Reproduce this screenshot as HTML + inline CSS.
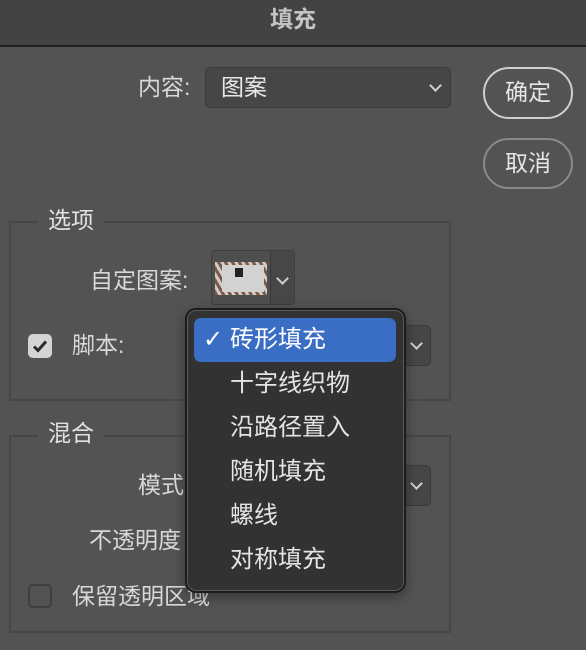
<!DOCTYPE html>
<html><head><meta charset="utf-8"><style>
*{box-sizing:border-box;margin:0;padding:0}
body{width:586px;height:650px;background:#535353;font-family:"Liberation Sans","Noto Sans CJK SC",sans-serif;color:#d8d8d8;position:relative;overflow:hidden;font-size:23px}
.a{position:absolute;white-space:nowrap;line-height:1}
.title{position:absolute;left:0;top:0;width:586px;height:47px;background:#434343;border-bottom:2px solid #1e1e1e;text-align:center;font-size:23px;font-weight:bold;color:#c4c4c4;line-height:38px}
.sel{position:absolute;background:#464646;border:1.5px solid #3a3a3a;border-radius:5px}
.chev{position:absolute;width:9px;height:9px;border-right:2px solid #d0d0d0;border-bottom:2px solid #d0d0d0;transform:rotate(45deg)}
.btn{position:absolute;border:2px solid #cfcfcf;border-radius:26px;text-align:center;font-size:23px;color:#e6e6e6}
.grp{position:absolute;border:2px solid #464646}
.leg{position:absolute;background:#535353;padding:0 10px;font-size:23px;color:#e2e2e2}
.cb{position:absolute;width:24px;height:24px;border-radius:5px}
.menu{position:absolute;left:185px;top:308px;width:221px;height:285px;background:#323232;border:2px solid #1c1c1c;border-radius:11px;box-shadow:inset 0 0 0 1px #5a5a5a,0 4px 12px rgba(0,0,0,.35)}
.hl{position:absolute;left:194px;top:318px;width:202px;height:44px;background:#3a6ec4;border-radius:7px}
.mi{position:absolute;left:230px;font-size:24px;color:#e4e4e4;line-height:1}
</style></head><body>
<div class="title">填充</div>

<div class="a" style="left:138px;top:76px;">内容:</div>
<div class="sel" style="left:205px;top:67px;width:246px;height:41px"></div>
<div class="a" style="left:221px;top:76px;color:#e8e8e8">图案</div>
<div class="chev" style="left:431px;top:81px"></div>

<div class="btn" style="left:483px;top:67px;width:90px;height:52px;line-height:47px">确定</div>
<div class="btn" style="left:483px;top:138px;width:90px;height:51px;line-height:46px;border-color:#8a8a8a">取消</div>

<div class="grp" style="left:9px;top:221px;width:442px;height:180px"></div>
<div class="leg" style="left:38px;top:207px;line-height:26px">选项</div>
<div class="a" style="left:90px;top:269px">自定图案:</div>
<div style="position:absolute;left:211px;top:250px;width:84px;height:55px;border:1.5px solid #3e3e3e;border-radius:4px;background:#4e4e4e"></div>
<div style="position:absolute;left:270px;top:251px;width:24px;height:53px;background:#474747;border-left:1.5px solid #3a3a3a"></div>
<div style="position:absolute;left:215px;top:262px;width:52px;height:33px;background:repeating-linear-gradient(60deg,#7a5a4a 0 3px,#d4ccc4 3px 6px)"></div>
<div style="position:absolute;left:222px;top:265px;width:42px;height:27px;background:#d2d2d2"></div>
<div style="position:absolute;left:235px;top:268px;width:8px;height:9px;background:#222"></div>
<div class="chev" style="left:278px;top:274px"></div>

<div class="cb" style="left:28px;top:334px;background:#d4d4d4"></div>
<svg style="position:absolute;left:28px;top:334px" width="24" height="24"><path d="M6 12.5l4 4 8-9" stroke="#2a2a2a" stroke-width="3" fill="none"/></svg>
<div class="a" style="left:72px;top:334px">脚本:</div>
<div class="sel" style="left:380px;top:325px;width:51px;height:41px"></div>
<div class="chev" style="left:412px;top:339px"></div>

<div class="grp" style="left:9px;top:435px;width:442px;height:198px"></div>
<div class="leg" style="left:38px;top:420px;line-height:26px">混合</div>
<div class="a" style="left:138px;top:474px">模式</div>
<div class="sel" style="left:380px;top:465px;width:51px;height:41px"></div>
<div class="chev" style="left:412px;top:479px"></div>
<div class="a" style="left:89px;top:529px">不透明度</div>
<div class="cb" style="left:28px;top:584px;border:2px solid #3f3f3f"></div>
<div class="a" style="left:72px;top:585px">保留透明区域</div>

<div class="menu"></div>
<div class="hl"></div>
<div class="a" style="left:203px;top:327px;font-size:24px;color:#fff;font-family:'DejaVu Sans',sans-serif">✓</div>
<div class="mi" style="top:328px;color:#fff">砖形填充</div>
<div class="mi" style="top:372px">十字线织物</div>
<div class="mi" style="top:416px">沿路径置入</div>
<div class="mi" style="top:460px">随机填充</div>
<div class="mi" style="top:504px">螺线</div>
<div class="mi" style="top:548px">对称填充</div>
</body></html>
